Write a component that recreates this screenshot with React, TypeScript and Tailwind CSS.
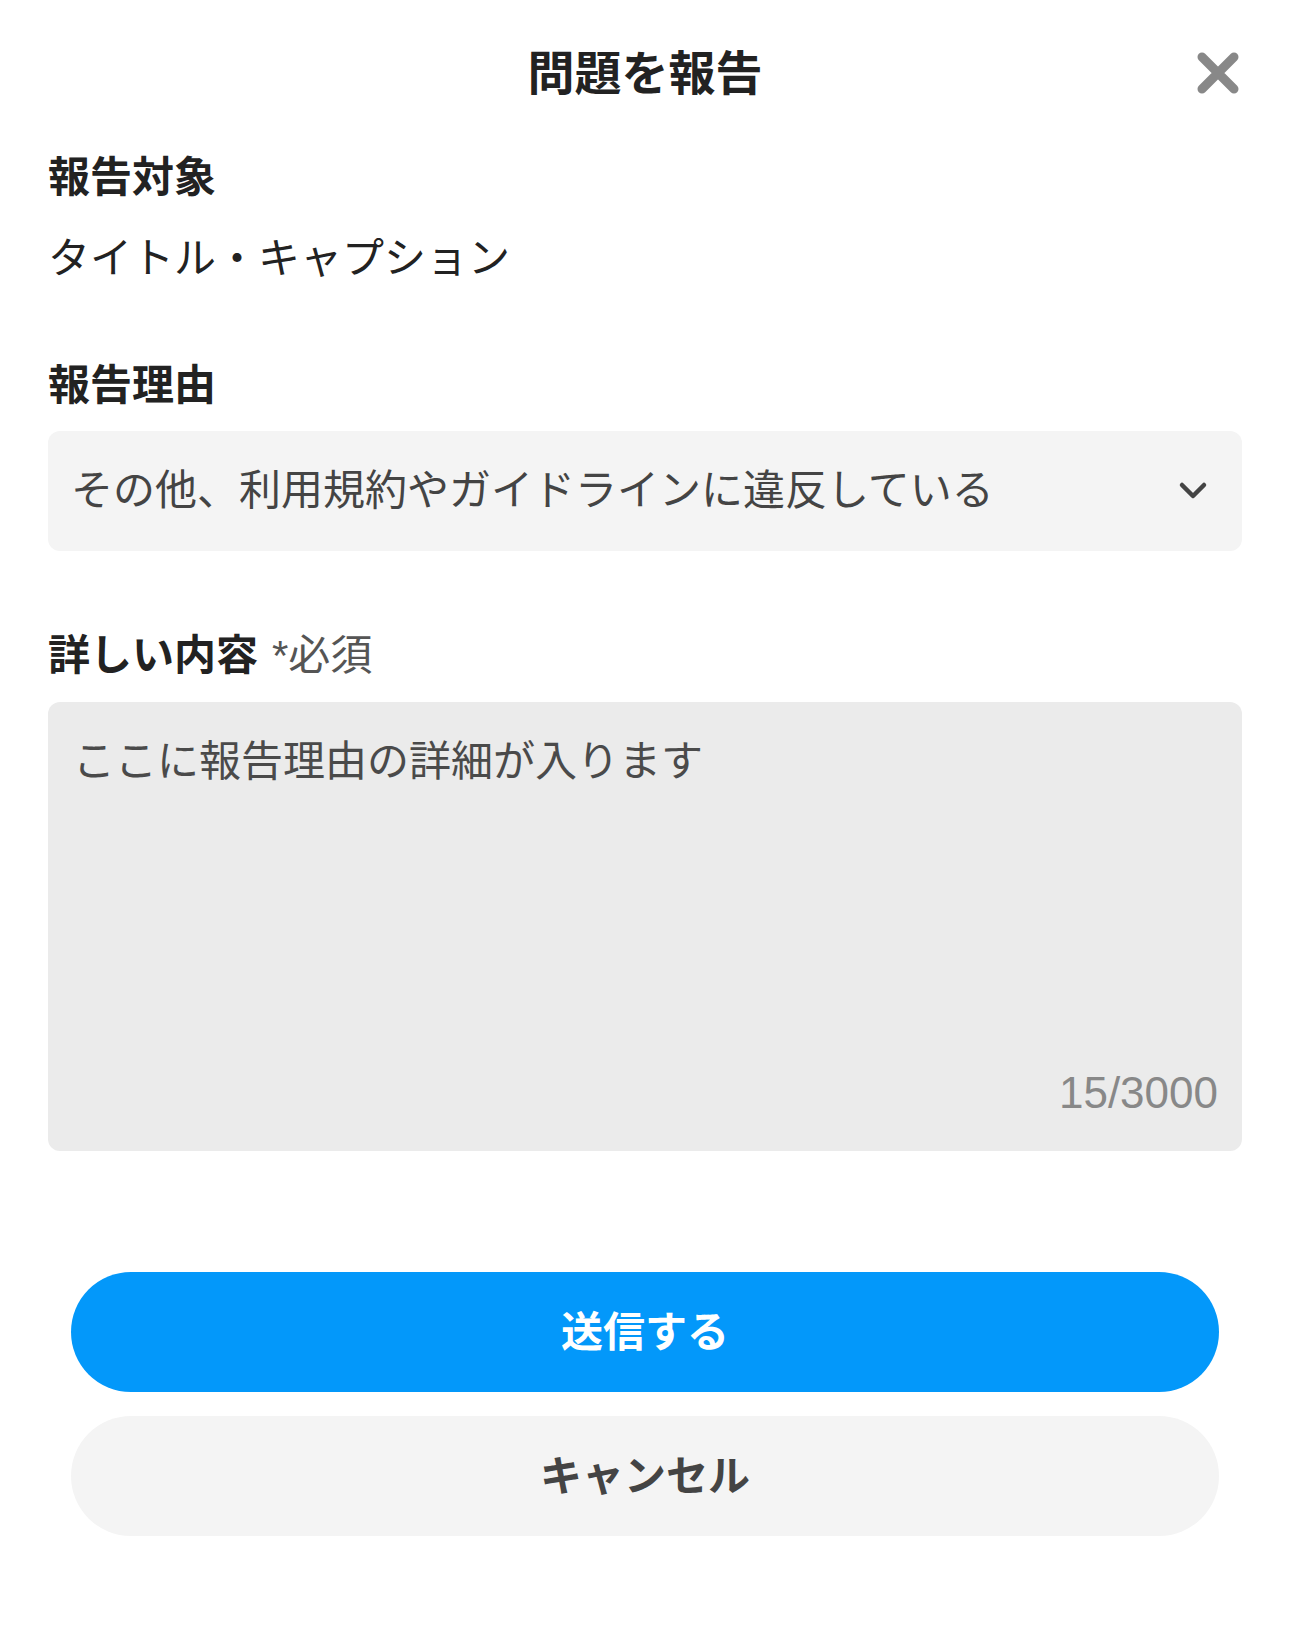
import React, { useState } from 'react';

const font = { fontFamily: '"Liberation Sans", "Noto Sans CJK JP", sans-serif' };

const CloseIcon = () => (
  <svg width="44" height="44" viewBox="0 0 44 44" fill="none">
    <path d="M6 6L38 38M38 6L6 38" stroke="#888888" strokeWidth="9" strokeLinecap="round" />
  </svg>
);

const ChevronDown = () => (
  <svg width="30" height="22" viewBox="0 0 30 22" fill="none">
    <path d="M4 5L15 16L26 5" stroke="#444444" strokeWidth="4.5" strokeLinecap="round" strokeLinejoin="round" />
  </svg>
);

export default function App() {
  const [detail] = useState('ここに報告理由の詳細が入ります');

  return (
    <div className="w-[1290px] h-[1646px] bg-white text-[#222222]" style={font}>
      {/* Header */}
      <header className="relative h-[146px] flex items-center justify-center">
        <h1 className="text-[47px] font-bold leading-none">問題を報告</h1>
        <button className="absolute right-[50px] top-[51px]">
          <CloseIcon />
        </button>
      </header>

      <div className="px-12">
        <p className="mt-[2px] text-[42px] font-bold leading-[60px]">報告対象</p>
        <p className="mt-[21px] text-[42px] leading-[60px]">タイトル・キャプション</p>

        <p className="mt-[67px] text-[42px] font-bold leading-[60px]">報告理由</p>
        <div className="mt-[15px] h-[120px] rounded-xl bg-[#f4f4f4] flex items-center justify-between pl-[23px] pr-[34px]">
          <span className="text-[42px] text-[#444444] leading-none">その他、利用規約やガイドラインに違反している</span>
          <ChevronDown />
        </div>

        <p className="mt-[75px] text-[42px] leading-[60px]">
          <span className="font-bold">詳しい内容</span>
          <span className="ml-[14px] text-[#555555]">*必須</span>
        </p>
        <div className="mt-[16px] h-[449px] rounded-xl bg-[#ebebeb] flex flex-col justify-between pt-[30px] pb-[28px] pl-[25px] pr-[28px]">
          <p className="text-[42px] text-[#4a4a4a] leading-[60px]">{detail}</p>
          <p className="text-right text-[44px] text-[#888888] leading-[60px] -mr-[4px]">15/3000</p>
        </div>
      </div>

      <div className="mt-[121px] px-[71px] flex flex-col gap-6">
        <button className="h-[120px] rounded-full bg-[#0398fa] text-white text-[42px] font-bold">送信する</button>
        <button className="h-[120px] rounded-full bg-[#f4f4f4] text-[#444444] text-[42px] font-bold">キャンセル</button>
      </div>
    </div>
  );
}
